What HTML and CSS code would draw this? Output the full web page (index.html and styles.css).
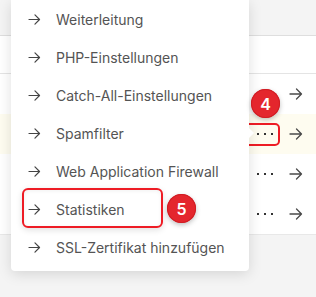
FILE: index.html
```html
<!DOCTYPE html>
<html lang="de">
<head>
<meta charset="utf-8">
<link rel="stylesheet" href="styles.css">
</head>
<body>
<div class="page">
  <div class="topbar"></div>
  <div class="table">
    <div class="row head"></div>
    <div class="row">
      <span class="more"><i></i><i></i><i></i></span>
      <svg class="go" viewBox="0 0 14 12"><path d="M1 6H12.5M7.5 1L12.5 6L7.5 11"/></svg>
    </div>
    <div class="row active">
      <span class="more marked"><i></i><i></i><i></i></span>
      <svg class="go" viewBox="0 0 14 12"><path d="M1 6H12.5M7.5 1L12.5 6L7.5 11"/></svg>
    </div>
    <div class="row">
      <span class="more"><i></i><i></i><i></i></span>
      <svg class="go" viewBox="0 0 14 12"><path d="M1 6H12.5M7.5 1L12.5 6L7.5 11"/></svg>
    </div>
    <div class="row">
      <span class="more"><i></i><i></i><i></i></span>
      <svg class="go" viewBox="0 0 14 12"><path d="M1 6H12.5M7.5 1L12.5 6L7.5 11"/></svg>
    </div>
  </div>

  <ul class="menu">
    <li><svg class="arrow" viewBox="0 0 14 12"><path d="M1 6H12.5M7.5 1L12.5 6L7.5 11"/></svg><span>Weiterleitung</span></li>
    <li><svg class="arrow" viewBox="0 0 14 12"><path d="M1 6H12.5M7.5 1L12.5 6L7.5 11"/></svg><span>PHP-Einstellungen</span></li>
    <li><svg class="arrow" viewBox="0 0 14 12"><path d="M1 6H12.5M7.5 1L12.5 6L7.5 11"/></svg><span>Catch-All-Einstellungen</span></li>
    <li><svg class="arrow" viewBox="0 0 14 12"><path d="M1 6H12.5M7.5 1L12.5 6L7.5 11"/></svg><span>Spamfilter</span></li>
    <li><svg class="arrow" viewBox="0 0 14 12"><path d="M1 6H12.5M7.5 1L12.5 6L7.5 11"/></svg><span>Web Application Firewall</span></li>
    <li class="hl"><svg class="arrow" viewBox="0 0 14 12"><path d="M1 6H12.5M7.5 1L12.5 6L7.5 11"/></svg><span>Statistiken</span><b class="badge badge5">5</b></li>
    <li><svg class="arrow" viewBox="0 0 14 12"><path d="M1 6H12.5M7.5 1L12.5 6L7.5 11"/></svg><span>SSL-Zertifikat hinzufügen</span></li>
  </ul>
  <span class="pointer"></span>
  <b class="badge badge4">4</b>
</div>
</body>
</html>
```

FILE: styles.css
```css
html, body {
  margin: 0;
  padding: 0;
}
body {
  width: 316px;
  height: 297px;
  overflow: hidden;
  background: #f4f4f4;
  font-family: Inter, "Noto Sans", sans-serif;
}
.page {
  position: relative;
  width: 316px;
  height: 297px;
}
.topbar {
  height: 35px;
  background: #f4f4f4;
  border-bottom: 1px solid #dedede;
}
.table {
  background: #fff;
  border-bottom: 1px solid #e8e8e8;
}
.row {
  height: 40px;
  display: flex;
  align-items: center;
  justify-content: flex-end;
  padding-right: 13px;
  gap: 9px;
}
.row.head {
  height: 37px;
  border-bottom: 1px solid #e4e4e4;
}
.row.active {
  background: #fefcf0;
}
.more {
  box-sizing: border-box;
  width: 39px;
  height: 23px;
  border: 2px solid transparent;
  border-radius: 5px;
  display: flex;
  align-items: center;
  padding-left: 14px;
  gap: 5px;
}
.more i {
  display: block;
  width: 2px;
  height: 2px;
  background: #333;
}
.more.marked {
  border-color: #ee1c25;
}
.go {
  width: 14px;
  height: 12px;
  fill: none;
  stroke: #4a4a4a;
  stroke-width: 1.3;
  stroke-linecap: round;
  stroke-linejoin: round;
}
.menu {
  position: absolute;
  left: 11px;
  top: 0;
  width: 238px;
  margin: 0;
  padding: 0 0 5px;
  list-style: none;
  background: #fff;
  border-radius: 0 0 4px 4px;
  box-shadow: 0 3px 14px rgba(0, 0, 0, 0.13);
}
.menu li {
  position: relative;
  height: 38px;
  display: flex;
  align-items: center;
  padding-left: 17px;
  gap: 15px;
  font-size: 14px;
  color: #545454;
}
.arrow {
  width: 13px;
  height: 11px;
  flex: none;
  fill: none;
  stroke: #444;
  stroke-width: 1.3;
  stroke-linecap: round;
  stroke-linejoin: round;
}
.menu li.hl::before {
  content: "";
  position: absolute;
  left: 11px;
  top: -2px;
  width: 141px;
  height: 40px;
  box-sizing: border-box;
  border: 2px solid #ee1c25;
  border-radius: 6px;
  box-shadow: 0 2px 6px rgba(0, 0, 0, 0.12), inset 0 1px 4px rgba(0, 0, 0, 0.06);
}
.badge {
  position: absolute;
  width: 29px;
  height: 29px;
  border-radius: 50%;
  background: #e4262d;
  box-shadow: 0 2px 5px rgba(0, 0, 0, 0.25), inset 0 0 0 1px #d01d24;
  color: #fff;
  font-size: 16px;
  font-weight: 600;
  display: flex;
  align-items: center;
  justify-content: center;
  font-style: normal;
}
.badge5 {
  left: 156px;
  top: 4px;
}
.badge4 {
  left: 251px;
  top: 89px;
}
.pointer {
  position: absolute;
  left: 249px;
  top: 128px;
  width: 0;
  height: 0;
  border-top: 5px solid transparent;
  border-bottom: 5px solid transparent;
  border-left: 5px solid #fff;
}
```
